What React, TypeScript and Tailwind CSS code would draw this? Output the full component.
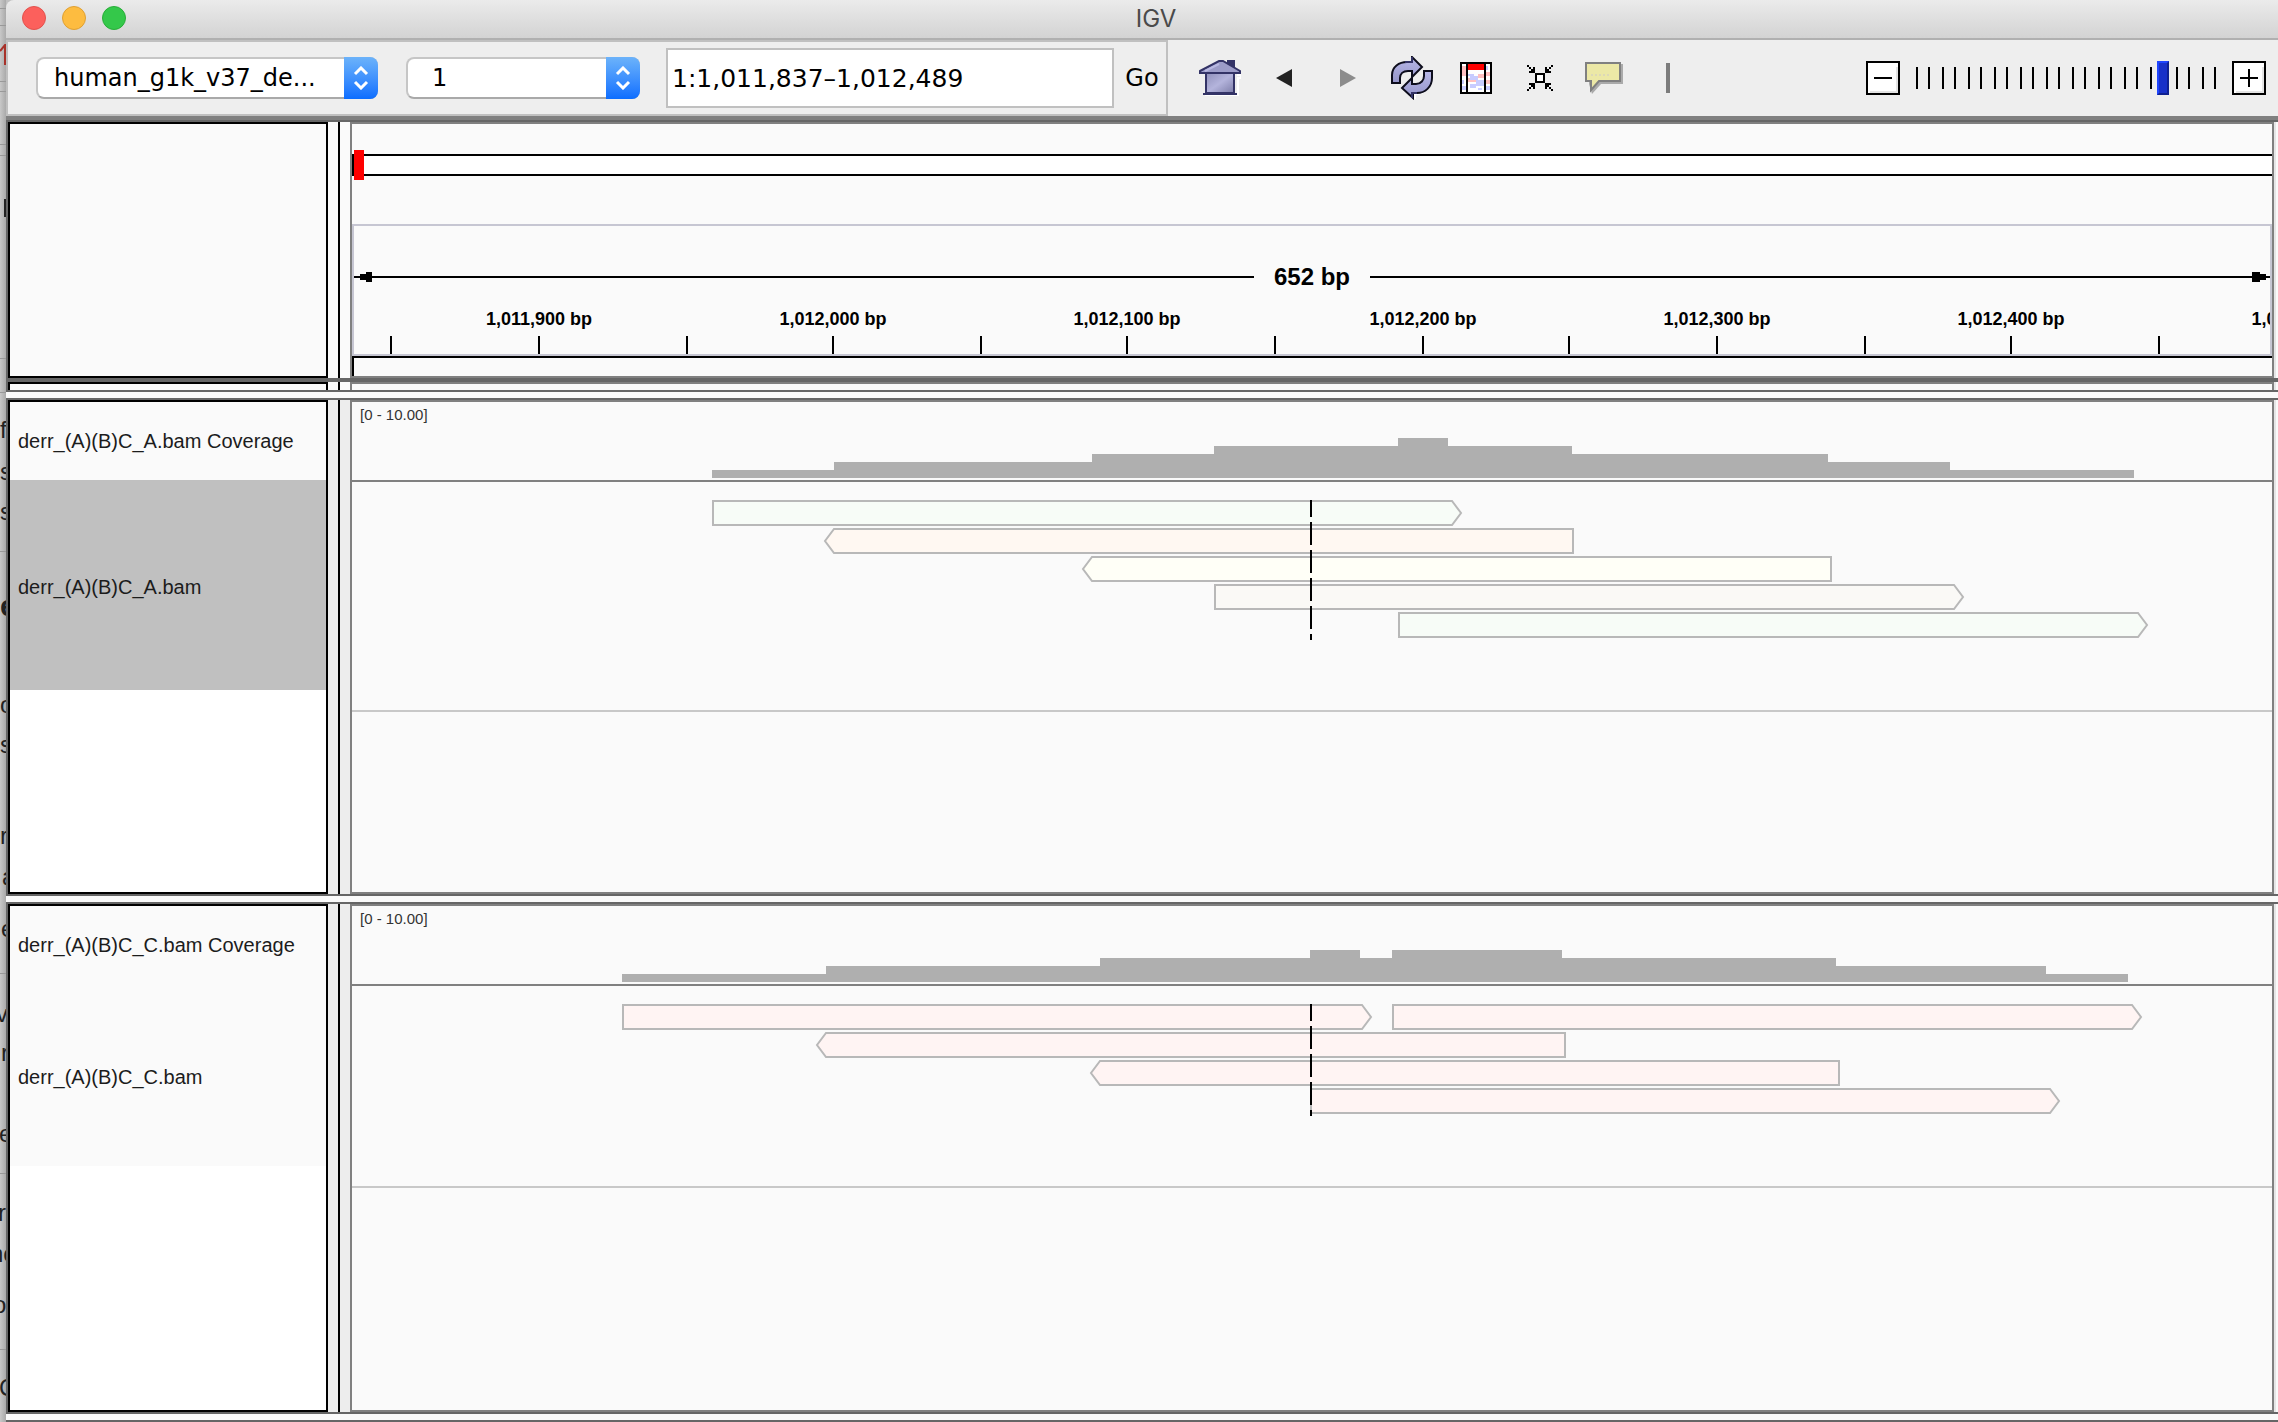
import React, { useState } from "react";

const START = 1011837;
const SPAN = 652;

/* Data coordinates snap to a two-unit grid, like the track drawings. */
const toX = (bp: number) => Math.round(((bp - START) / SPAN) * 960 + 0.25) * 2;

type Read = { row: number; from: number; to: number; dir: "left" | "right"; fill: string };
type Step = { from: number; to: number; depth: number };

const coverageA: Step[] = [
  { from: 360, to: 482, depth: 1 },
  { from: 482, to: 740, depth: 2 },
  { from: 740, to: 862, depth: 3 },
  { from: 862, to: 1046, depth: 4 },
  { from: 1046, to: 1096, depth: 5 },
  { from: 1096, to: 1220, depth: 4 },
  { from: 1220, to: 1476, depth: 3 },
  { from: 1476, to: 1598, depth: 2 },
  { from: 1598, to: 1782, depth: 1 },
];

const readsA: Read[] = [
  { row: 0, from: 360, to: 1100, dir: "right", fill: "#f7fcf7" },
  { row: 1, from: 482, to: 1222, dir: "left", fill: "#fff8f2" },
  { row: 2, from: 740, to: 1480, dir: "left", fill: "#fffff7" },
  { row: 3, from: 862, to: 1602, dir: "right", fill: "#faf9f6" },
  { row: 4, from: 1046, to: 1786, dir: "right", fill: "#f7fcf7" },
];

const coverageC: Step[] = [
  { from: 270, to: 474, depth: 1 },
  { from: 474, to: 748, depth: 2 },
  { from: 748, to: 958, depth: 3 },
  { from: 958, to: 1008, depth: 4 },
  { from: 1008, to: 1040, depth: 3 },
  { from: 1040, to: 1210, depth: 4 },
  { from: 1210, to: 1484, depth: 3 },
  { from: 1484, to: 1694, depth: 2 },
  { from: 1694, to: 1776, depth: 1 },
];

const readsC: Read[] = [
  { row: 0, from: 270, to: 1010, dir: "right", fill: "#fff4f3" },
  { row: 0, from: 1040, to: 1780, dir: "right", fill: "#fff4f3" },
  { row: 1, from: 474, to: 1214, dir: "left", fill: "#fff4f3" },
  { row: 2, from: 748, to: 1488, dir: "left", fill: "#fff4f3" },
  { row: 3, from: 958, to: 1698, dir: "right", fill: "#fff4f3" },
];

function CoverageChart({ steps }: { steps: Step[] }) {
  return (
    <svg className="block h-10 w-full" viewBox="0 0 1920 40" preserveAspectRatio="none" shapeRendering="crispEdges" aria-label="Coverage">
      {steps.map((s) => (
        <rect key={s.from} x={s.from} y={40 - s.depth * 8} width={s.to - s.from} height={s.depth * 8} fill="#afafaf" />
      ))}
    </svg>
  );
}

function ReadsChart({ reads, depth }: { reads: Read[]; depth: number }) {
  return (
    <svg className="block h-[140px] w-full" viewBox="0 0 1920 140" preserveAspectRatio="none" aria-label="Alignments">
      {reads.map((r) => {
        const t = r.row * 28 + 1;
        const b = t + 24;
        const m = t + 12;
        const d =
          r.dir === "right"
            ? `M${r.from + 1} ${t}H${r.to}L${r.to + 9} ${m}L${r.to} ${b}H${r.from + 1}Z`
            : `M${r.to - 1} ${t}H${r.from}L${r.from - 9} ${m}L${r.from} ${b}H${r.to - 1}Z`;
        return <path key={`${r.row}-${r.from}`} d={d} fill={r.fill} stroke="#b8b8b8" strokeWidth="2" />;
      })}
      <path d={`M959 0V${depth * 28}`} stroke="#000" strokeWidth="2" strokeDasharray="23 5" strokeDashoffset="6" />
    </svg>
  );
}

/* One horizontal band: track names on the left, splitter, data on the right. */
function Band({ names, data, className = "", gutter }: { names: React.ReactNode; data: React.ReactNode; className?: string; gutter: string }) {
  return (
    <section className={`flex border-l-2 border-[#666] ${className}`}>
      <div className="flex w-80 shrink-0 flex-col overflow-hidden border-2 border-black bg-white">{names}</div>
      <div className={`flex w-[22px] shrink-0 justify-center ${gutter}`}>
        <div className="w-[2px] bg-black" />
      </div>
      <div className="flex min-w-0 flex-1 flex-col overflow-hidden border-2 border-[#808080] bg-[#fafafa]">{data}</div>
      <div className="w-1 shrink-0 border-l-2 border-[#e6e6e6] bg-[#fafafa]" />
    </section>
  );
}

function Divider() {
  return <div className="h-[10px] shrink-0 border-y-2 border-[#666] bg-[#fafafa]" />;
}

function TrackBand(props: {
  name: string;
  steps: Step[];
  reads: Read[];
  rows: number;
  nameClass: string;
  readsClass: string;
  className?: string;
}) {
  return (
    <Band
      className={props.className}
      gutter="bg-[#ededed]"
      names={
        <>
          <div className="flex h-[78px] shrink-0 items-center bg-[#fafafa] pl-2 text-xl text-[#1c1c1c]">{props.name} Coverage</div>
          <div className={`flex shrink-0 items-center pt-1 pl-2 text-xl text-[#1c1c1c] ${props.nameClass}`}>{props.name}</div>
        </>
      }
      data={
        <>
          <div className="flex h-20 shrink-0 flex-col border-b-2 border-[#808080] pb-[2px]">
            <div className="pt-[3px] pl-2 text-[15px] leading-5 text-[#333]">[0 - 10.00]</div>
            <div className="mt-auto">
              <CoverageChart steps={props.steps} />
            </div>
          </div>
          <div className={`shrink-0 border-b-2 border-[#c8c8c8] pt-[18px] ${props.readsClass}`}>
            <ReadsChart reads={props.reads} depth={props.rows} />
          </div>
        </>
      }
    />
  );
}

const tickPositions = Array.from({ length: 13 }, (_, i) => 1011850 + i * 50);
const labelPositions = Array.from({ length: 7 }, (_, i) => 1011900 + i * 100);

function Ruler() {
  return (
    <div className="flex h-[132px] flex-col overflow-hidden border-2 border-[#c6c6d2]">
      <div className="mt-[37px] flex h-7 shrink-0 items-center">
        <svg className="h-[10px] w-[18px] shrink-0" viewBox="0 0 18 10" shapeRendering="crispEdges" aria-hidden="true">
          <path d="M0 4H6V2H12V0H18V10H12V8H6V6H0Z" />
        </svg>
        <div className="h-[2px] flex-1 bg-black" />
        <span className="px-5 text-2xl font-bold">652 bp</span>
        <div className="h-[2px] flex-1 bg-black" />
        <svg className="h-[10px] w-[18px] shrink-0" viewBox="0 0 18 10" shapeRendering="crispEdges" aria-hidden="true">
          <path d="M0 0H8V2H14V4H18V6H14V8H8V10H0Z" />
        </svg>
      </div>
      <div className="relative mt-4 h-6 shrink-0">
        {labelPositions.map((bp) => (
          <span
            key={bp}
            className="absolute -translate-x-1/2 text-lg leading-6 font-bold whitespace-nowrap"
            style={{ left: `${((toX(bp) - 1) / 1916) * 100}%` }}
          >
            {bp.toLocaleString("en-US")} bp
          </span>
        ))}
      </div>
      <svg className="mt-auto block h-[18px] w-full shrink-0" viewBox="2 0 1916 18" preserveAspectRatio="none" shapeRendering="crispEdges" aria-hidden="true">
        {tickPositions.map((bp) => (
          <rect key={bp} x={toX(bp)} y="0" width="2" height="18" />
        ))}
      </svg>
    </div>
  );
}

function ComboBox({ label, value, className, textClass }: { label: string; value: string; className: string; textClass: string }) {
  return (
    <div className={`relative h-[42px] shrink-0 ${className}`}>
      <select
        aria-label={label}
        className={`h-full w-full appearance-none rounded-lg border-2 border-[#c6c6c6] border-b-[#a9a9a9] bg-white pr-9 text-2xl leading-9 text-black ${textClass}`}
      >
        <option>{value}</option>
      </select>
      <span className="pointer-events-none absolute inset-y-0 right-0 flex w-[34px] items-center justify-center rounded-r-lg bg-linear-to-b from-[#6cb3fa] to-[#0a6dff]">
        <svg width="16" height="24" viewBox="0 0 16 24" fill="none" stroke="#fff" strokeWidth="3" aria-hidden="true">
          <path d="M2 8L8 2L14 8M2 16L8 22L14 16" />
        </svg>
      </span>
    </div>
  );
}

function HomeIcon() {
  return (
    <svg width="42" height="36" viewBox="0 0 42 36" aria-hidden="true">
      <defs>
        <linearGradient id="wall" x1="0" y1="0" x2="1" y2="1">
          <stop offset="0" stopColor="#8f8fba" />
          <stop offset="0.5" stopColor="#b4b4dc" />
          <stop offset="1" stopColor="#7c7ca8" />
        </linearGradient>
      </defs>
      <path d="M38 15H42V18H39V35H6" fill="none" stroke="#fff" strokeWidth="2" />
      <path d="M28 0H36V10L28 6Z" fill="#333366" />
      <path d="M7 13H35V33H7Z" fill="url(#wall)" stroke="#333366" strokeWidth="2" />
      <path d="M1 11L20 1H24L41 11V13H1Z" fill="#9c9cc8" stroke="#333366" strokeWidth="2" />
      <path d="M6 11L20 4" stroke="#b9b9e2" strokeWidth="2" />
      <path d="M0 13H42M4 34H38" stroke="#333366" strokeWidth="2" />
    </svg>
  );
}

function RefreshIcon() {
  return (
    <svg width="42" height="44" viewBox="0 0 42 44" aria-hidden="true">
      <defs>
        <linearGradient id="arc" x1="0" y1="0" x2="0" y2="1">
          <stop offset="0" stopColor="#b8b8e8" />
          <stop offset="1" stopColor="#9494c8" />
        </linearGradient>
      </defs>
      <path d="M42 18C42 30 34 38 24 38V43" stroke="#fff" strokeWidth="2" fill="none" />
      <g fill="url(#arc)" stroke="#0d0d1c" strokeWidth="2">
        <path d="M1 27V19C1 11 8 6 16 6H21V1L31 11L21 21V15H17C12 15 9 18 9 22V27Z" />
        <path d="M41 15V22C41 31 34 37 26 37H22V42L11 32L21 22V28H25C30 28 33 24 33 20V15Z" />
      </g>
      <path d="M21 1V6H14M21 42V37H26" stroke="#333366" strokeWidth="2" fill="none" />
    </svg>
  );
}

function RegionIcon() {
  return (
    <svg width="32" height="32" viewBox="0 0 32 32" shapeRendering="crispEdges" aria-hidden="true">
      <rect x="1" y="1" width="30" height="30" fill="#fff" stroke="#000" strokeWidth="2" />
      <path d="M2 4H6V14H2ZM8 16H16V20H8ZM18 12H24V16H18ZM26 10H30V14H26ZM26 18H30V22H26Z" fill="#ffc0c0" />
      <path d="M2 18H4V22H2ZM2 24H6V28H2ZM8 12H14V14H8ZM10 14H18V18H10ZM16 18H24V24H16ZM10 22H16V26H10ZM18 26H22V28H18ZM26 4H28V8H26ZM26 24H30V28H26Z" fill="#c8ccff" />
      <rect x="8" y="2" width="16" height="6" fill="#f00" />
      <path d="M7 2V30M25 2V30" stroke="#000" strokeWidth="2" />
    </svg>
  );
}

function CollapseIcon() {
  return (
    <svg width="26" height="26" viewBox="0 0 26 26" shapeRendering="crispEdges" aria-hidden="true">
      <rect x="9" y="9" width="8" height="8" fill="#fff" stroke="#000" strokeWidth="2" />
      <path d="M0 0H2V2H4V4H6V2H8V8H2V6H4V4H2V2H0ZM26 0H24V2H22V4H20V2H18V8H24V6H22V4H24V2H26ZM0 26H2V24H4V22H6V24H8V18H2V20H4V22H2V24H0ZM26 26H24V24H22V22H20V24H18V18H24V20H22V22H24V24H26Z" />
    </svg>
  );
}

function NoteIcon() {
  return (
    <svg width="38" height="32" viewBox="0 0 38 32" aria-hidden="true">
      <path d="M4 2H38V22H16L7 32L4 22Z" fill="#aaa" />
      <path d="M1 1H35V19H14L6 28V19H1Z" fill="#ece8a6" stroke="#808080" strokeWidth="2" />
      <path d="M6 13H26" stroke="#dcd8b8" strokeWidth="2" strokeDasharray="2 2" />
    </svg>
  );
}

function ToolButton({ label, children }: { label: string; children: React.ReactNode }) {
  return (
    <button type="button" aria-label={label} className="flex h-full w-16 items-center justify-center">
      {children}
    </button>
  );
}

function ZoomButton({ label, plus }: { label: string; plus?: boolean }) {
  return (
    <button type="button" aria-label={label} className="h-[34px] w-[34px] shrink-0">
      <svg width="34" height="34" viewBox="0 0 34 34" shapeRendering="crispEdges" aria-hidden="true">
        <rect x="1" y="1" width="32" height="32" fill="#fff" stroke="#000" strokeWidth="2" />
        <path d="M4 31H31V6" fill="none" stroke="#e4e4e4" strokeWidth="2" />
        <path d={plus ? "M8 17H26M17 8V26" : "M8 17H26"} stroke="#000" strokeWidth="2" />
      </svg>
    </button>
  );
}

function ZoomSlider() {
  const [zoom, setZoom] = useState(19);
  return (
    <div className="relative h-[34px] w-[310px]">
      <svg className="absolute inset-0" width="310" height="34" viewBox="0 0 310 34" shapeRendering="crispEdges" aria-hidden="true">
        {Array.from({ length: 24 }, (_, i) => (
          <rect key={i} x={5 + Math.floor(i * 6.5) * 2} y="6" width="2" height="22" />
        ))}
      </svg>
      <input
        type="range"
        aria-label="Zoom"
        min={0}
        max={23}
        value={zoom}
        onChange={(e) => setZoom(Number(e.target.value))}
        className="absolute inset-0 h-full w-full appearance-none bg-transparent [&::-webkit-slider-thumb]:h-[34px] [&::-webkit-slider-thumb]:w-3 [&::-webkit-slider-thumb]:appearance-none [&::-webkit-slider-thumb]:border-2 [&::-webkit-slider-thumb]:border-t-[#1f45ff] [&::-webkit-slider-thumb]:border-r-[#0f2090] [&::-webkit-slider-thumb]:border-b-[#0f2090] [&::-webkit-slider-thumb]:border-l-[#1f45ff] [&::-webkit-slider-thumb]:bg-[#1830c8]"
      />
    </div>
  );
}

/* Sliver of the document lying behind the window. */
const behindText = [
  { y: 430, x: 0, ch: "f" },
  { y: 472, x: 0, ch: "s" },
  { y: 512, x: 0, ch: "s" },
  { y: 705, x: 0, ch: "o" },
  { y: 745, x: 0, ch: "s" },
  { y: 836, x: 0, ch: "r" },
  { y: 877, x: 2, ch: "a" },
  { y: 929, x: 1, ch: "e" },
  { y: 1014, x: -4, ch: "v" },
  { y: 1053, x: 1, ch: "r" },
  { y: 1134, x: -1, ch: "e" },
  { y: 1213, x: -2, ch: "r" },
  { y: 1254, x: -10, ch: "no" },
  { y: 1305, x: -7, ch: "o" },
  { y: 1388, x: -1, ch: "C" },
];
const behindLines = [8, 25, 81, 91, 144, 155, 358, 392, 551, 973, 1173, 1349];

function Behind() {
  return (
    <div aria-hidden="true" className="relative w-[6px] shrink-0 overflow-hidden bg-linear-to-r from-[#c8c8c8] to-[#aaaaaa]">
      {behindLines.map((y) => (
        <div key={y} className="absolute inset-x-0 h-px bg-[#999]" style={{ top: y }} />
      ))}
      <svg className="absolute top-[44px] left-0" width="6" height="22" viewBox="0 0 6 22">
        <path d="M0 7L5 1V21" fill="none" stroke="#a8322a" strokeWidth="2" />
      </svg>
      <div className="absolute top-[199px] right-0 h-[18px] w-[2px] bg-[#222]" />
      {behindText.map((t) => (
        <span key={t.y} className="absolute -translate-y-1/2 text-2xl text-[#222]" style={{ top: t.y, left: t.x }}>
          {t.ch}
        </span>
      ))}
      <span className="absolute top-[590px] left-0 text-3xl leading-8 font-bold text-[#222]">e</span>
    </div>
  );
}

export default function App() {
  return (
    <div className="flex min-h-screen overflow-hidden bg-[#c0c0c0] font-['Liberation_Sans',Arial,sans-serif] text-black">
      <Behind />
      <main className="flex min-w-0 flex-1 flex-col overflow-hidden">
        <header className="relative flex h-10 shrink-0 items-center justify-center rounded-tl-lg border-b-2 border-[#b0b0b0] bg-linear-to-b from-[#ebebeb] to-[#d3d3d3] pl-7">
          <div className="absolute top-[6px] left-4 flex gap-4">
            <button type="button" aria-label="Close" className="h-6 w-6 rounded-full border border-[#e2524d] bg-[#fc605c]" />
            <button type="button" aria-label="Minimize" className="h-6 w-6 rounded-full border border-[#dfa033] bg-[#fdbc40]" />
            <button type="button" aria-label="Zoom window" className="h-6 w-6 rounded-full border border-[#28ae38] bg-[#34c84a]" />
          </div>
          <h1 className="font-['Inter',sans-serif] text-2xl leading-none text-[#4a4a4a]">IGV</h1>
        </header>

        <div className="flex h-[76px] shrink-0 items-center bg-[#eeeeee] font-['DejaVu_Sans',sans-serif]">
          <form className="flex h-full shrink-0 items-center border-2 border-[#c0c0c0] pl-7" onSubmit={(e) => e.preventDefault()}>
            <ComboBox label="Genome" value="human_g1k_v37_de..." className="w-[342px]" textClass="pl-4" />
            <ComboBox label="Chromosome" value="1" className="ml-7 w-[234px]" textClass="pl-6" />
            <input
              aria-label="Locus"
              defaultValue="1:1,011,837–1,012,489"
              className="ml-[26px] h-[60px] w-[448px] border-2 border-[#c0c0c0] bg-white px-1 text-[25px]"
            />
            <button type="submit" className="w-[52px] pl-1 text-2xl">
              Go
            </button>
          </form>
          <nav aria-label="Tools" className="ml-5 flex h-full shrink-0 items-center">
            <ToolButton label="Home"><HomeIcon /></ToolButton>
            <ToolButton label="Back">
              <svg width="16" height="18" viewBox="0 0 16 18" aria-hidden="true"><path d="M0 9L16 0V18Z" fill="#222" /></svg>
            </ToolButton>
            <ToolButton label="Forward">
              <svg width="16" height="18" viewBox="0 0 16 18" aria-hidden="true"><path d="M16 9L0 0V18Z" fill="#8c8c8c" /></svg>
            </ToolButton>
            <ToolButton label="Refresh"><RefreshIcon /></ToolButton>
            <ToolButton label="Region of interest"><RegionIcon /></ToolButton>
            <ToolButton label="Resize tracks"><CollapseIcon /></ToolButton>
            <ToolButton label="Popup behavior"><NoteIcon /></ToolButton>
            <ToolButton label="Center line"><span className="h-[30px] w-1 bg-[#7c7c7c]" /></ToolButton>
          </nav>
          <div className="ml-auto flex shrink-0 items-center gap-[11px] pr-3">
            <ZoomButton label="Zoom out" />
            <ZoomSlider />
            <ZoomButton label="Zoom in" plus />
          </div>
        </div>
        <div className="h-[6px] shrink-0 border-b-2 border-[#666] bg-[#808080]" />

        <Band
          gutter="bg-[#fafafa]"
          names={<div className="flex-1 bg-[#fafafa]" />}
          data={
            <>
              <div className="relative mt-[30px] mb-12 h-[22px] shrink-0 border-y-2 border-l-2 border-black bg-white">
                <div className="absolute -top-[6px] left-0 h-[30px] w-[10px] bg-[#f00]" />
              </div>
              <Ruler />
              <div className="h-5 shrink-0 border-t-2 border-l-2 border-black" />
            </>
          }
        />
        <div className="h-1 shrink-0 bg-[#666]" />
        <section className="flex h-2 shrink-0 border-l-2 border-[#666]">
          <div className="w-80 shrink-0 border-x-2 border-t-2 border-black bg-[#fafafa]" />
          <div className="flex w-[22px] shrink-0 justify-center bg-[#fafafa]">
            <div className="w-[2px] bg-black" />
          </div>
          <div className="flex-1 border-x-2 border-t-2 border-[#808080] bg-[#fafafa]" />
          <div className="w-1 border-l-2 border-[#e6e6e6] bg-[#fafafa]" />
        </section>
        <Divider />
        <TrackBand
          name="derr_(A)(B)C_A.bam"
          steps={coverageA}
          reads={readsA}
          rows={5}
          nameClass="h-[210px] bg-[#c0c0c0]"
          readsClass="h-[230px]"
          className="h-[494px] shrink-0"
        />
        <Divider />
        <TrackBand
          name="derr_(A)(B)C_C.bam"
          steps={coverageC}
          reads={readsC}
          rows={4}
          nameClass="h-[182px] bg-[#fafafa]"
          readsClass="h-[202px]"
          className="flex-1"
        />
        <Divider />
      </main>
    </div>
  );
}
